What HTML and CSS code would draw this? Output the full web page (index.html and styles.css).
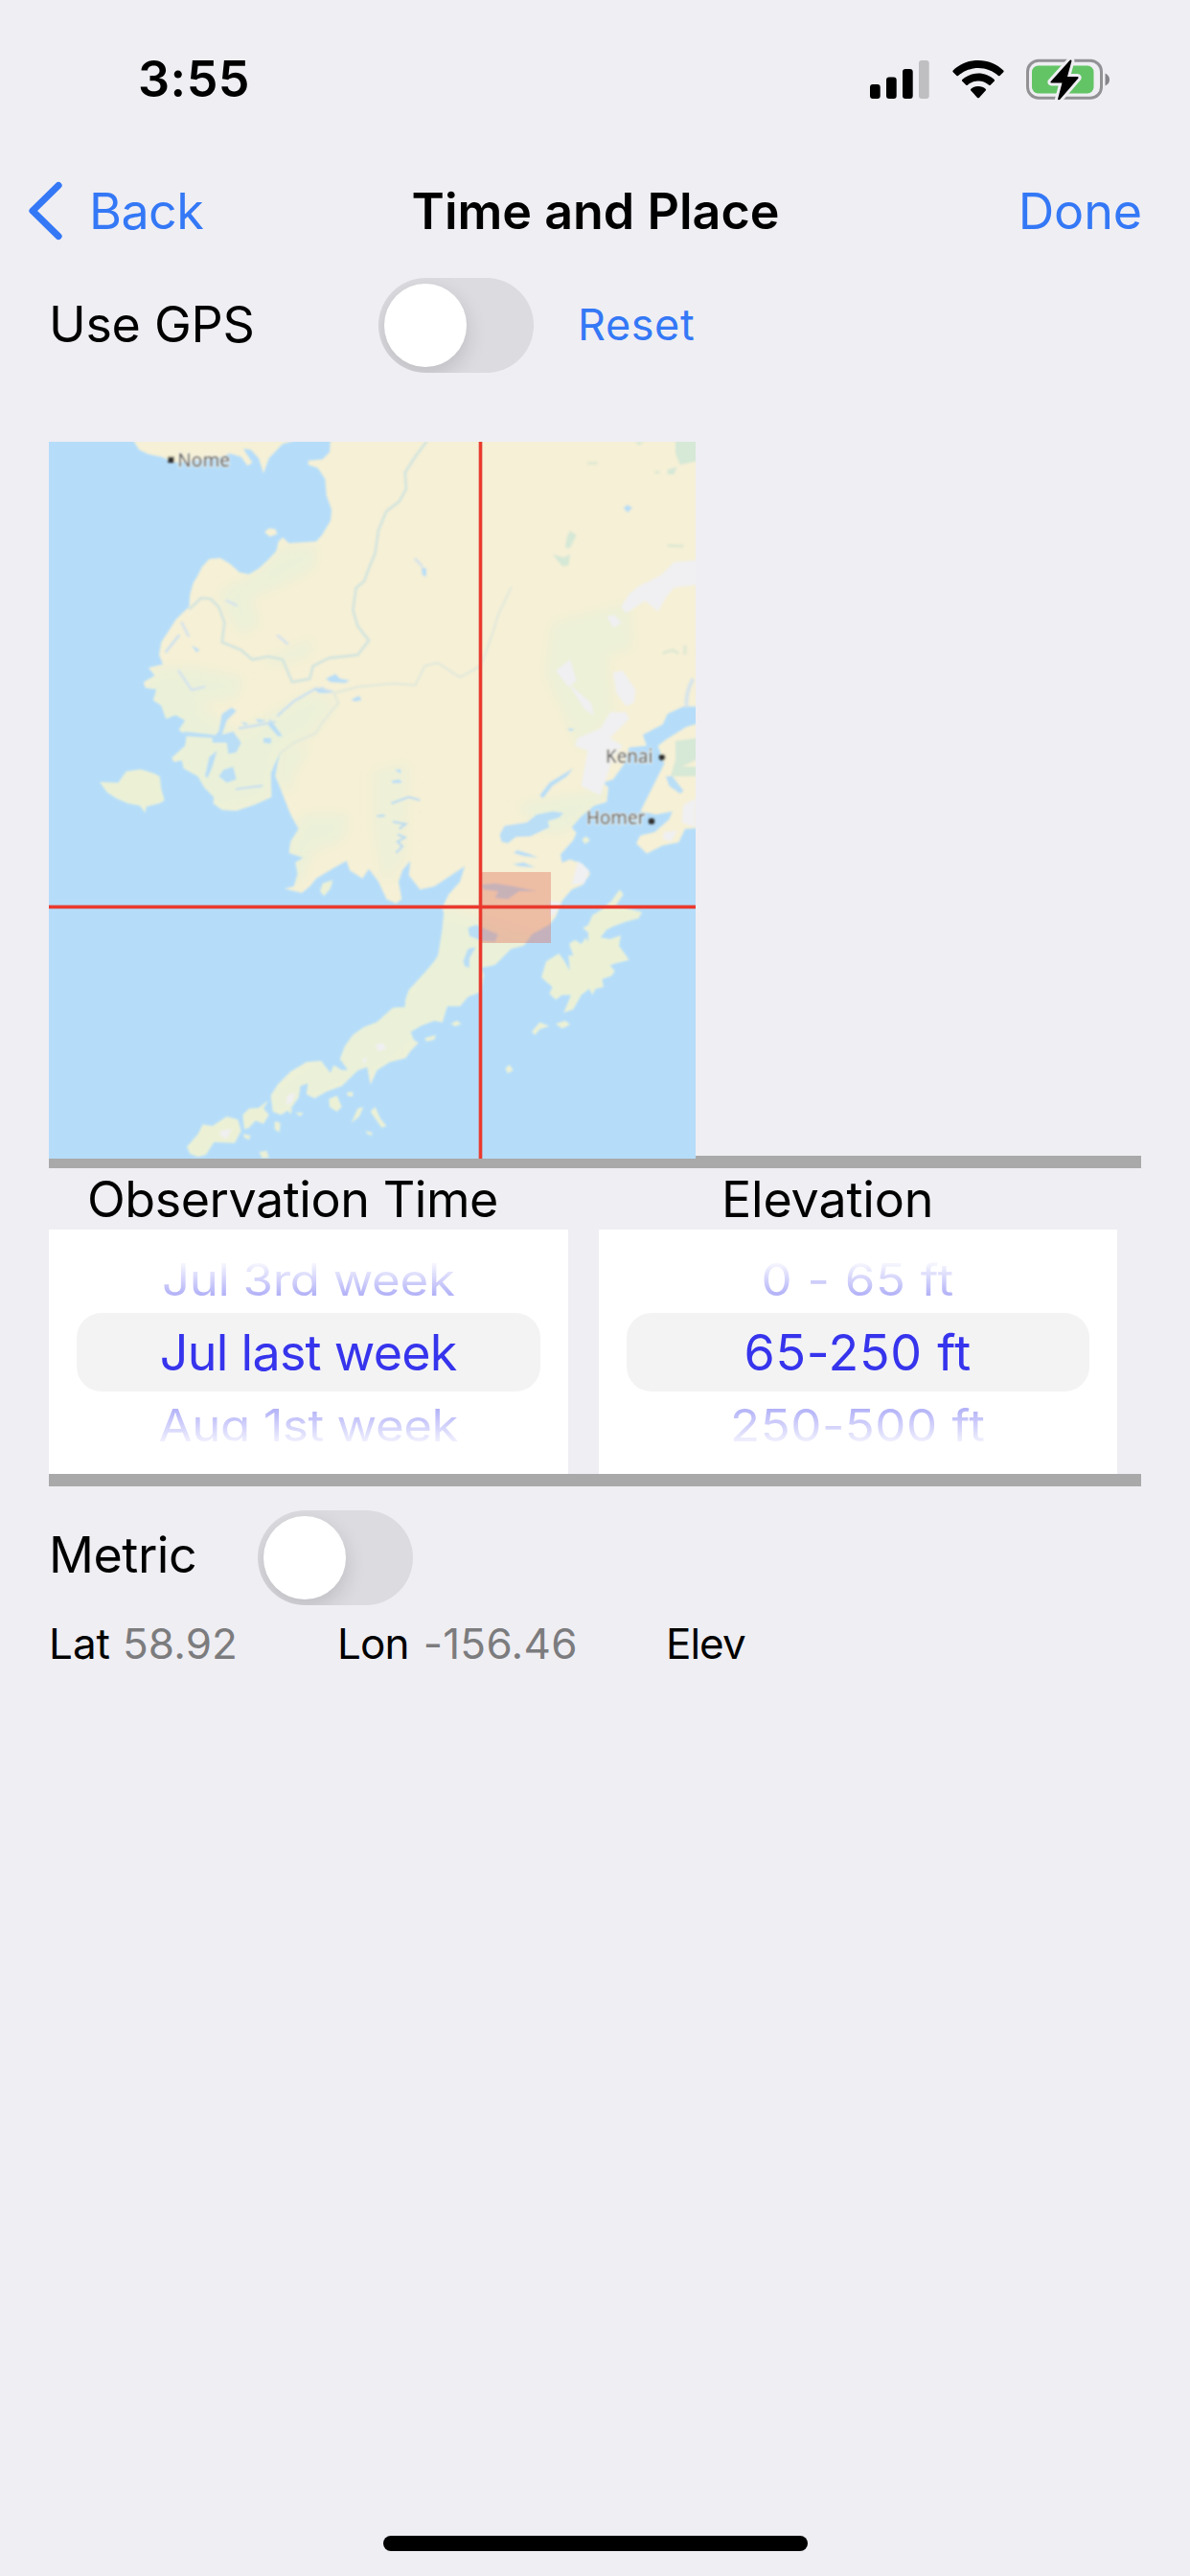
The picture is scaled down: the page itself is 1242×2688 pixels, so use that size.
FILE: index.html
```html
<!DOCTYPE html>
<html lang="en">
<head>
<meta charset="utf-8">
<title>Time and Place</title>
<link rel="stylesheet" href="styles.css">
</head>
<body>
<div class="screen">
  <header class="status">
    <span class="clock">3:55</span>
    <div class="status-icons">
      <svg class="signal" width="62" height="40" viewBox="0 0 62 40">
        <rect x="0" y="25" width="10.7" height="15" rx="3"/>
        <rect x="17" y="17.500" width="10.7" height="22.500" rx="3"/>
        <rect x="34" y="9" width="10.7" height="31" rx="3"/>
        <rect x="51" y="0" width="10.7" height="40" rx="3" fill="#bfbfc2"/>
      </svg>
      <svg class="wifi" width="54" height="40" viewBox="0 0 54 40">
        <path d="M27 0C37 0 46.500 4 53.300 10.500Q54 11.300 53.300 12.200L49.500 16Q48.700 16.600 48 16C42.500 11 35 8 27 8S11.500 11 6 16Q5.300 16.600 4.500 16L.7 12.200Q0 11.300 .7 10.500C7.500 4 17 0 27 0Z"/>
        <path d="M27 13.500C33.500 13.500 39.200 16 43.700 20Q44.500 20.900 43.700 21.700L39.700 25.700Q39 26.300 38.200 25.700C35 23 31.200 21.500 27 21.500S19 23 15.800 25.700Q15 26.300 14.300 25.700L10.300 21.700Q9.500 20.900 10.300 20C14.800 16 20.500 13.500 27 13.500Z"/>
        <path d="M27 27C30 27 32.600 28 34.600 29.700Q35.500 30.600 34.700 31.500L27.900 38.900Q27 39.800 26.100 38.900L19.300 31.500Q18.500 30.600 19.400 29.700C21.400 28 24 27 27 27Z"/>
      </svg>
      <svg class="battery" width="88" height="46" viewBox="0 0 88 46">
        <rect x="1.500" y="3.200" width="77" height="39" rx="11.500" fill="none" stroke="#929295" stroke-width="3"/>
        <path d="M82.500 16.500Q87 18.500 87 23T82.500 29.500Z" fill="#85858a"/>
        <rect x="6" y="8.500" width="64.500" height="29" rx="6.500" fill="#63c466"/>
        <path d="M46 2.500L25.500 25.200Q25 26.500 26.500 26.500H37.500L33 43.500Q34 45 35.500 43.500L54.500 21.500Q55 20 53.500 20H43L47.500 3.500Q47.200 2 46 2.500Z" stroke="#efeef3" stroke-width="6" stroke-linejoin="round"/>
        <path d="M46 2.500L25.500 25.200Q25 26.500 26.500 26.500H37.500L33 43.500Q34 45 35.500 43.500L54.500 21.500Q55 20 53.500 20H43L47.500 3.500Q47.200 2 46 2.500Z"/>
      </svg>
    </div>
  </header>

  <nav class="navbar">
    <a class="back">
      <svg width="38" height="64" viewBox="0 0 38 64"><path d="M32 5.500L5 32L32 58.500" fill="none" stroke="#3478f6" stroke-width="7.200" stroke-linecap="round" stroke-linejoin="round"/></svg>
      <span>Back</span>
    </a>
    <h1>Time and Place</h1>
    <a class="done">Done</a>
  </nav>

  <main>
    <section class="gps">
      <span class="label">Use GPS</span>
      <span class="toggle"><span class="knob"></span></span>
      <a class="reset">Reset</a>
    </section>

    <svg class="map" width="675" height="748" viewBox="33 33 2025 2244" preserveAspectRatio="none">
      <defs>
        <filter id="soft" x="-5%" y="-5%" width="110%" height="110%"><feGaussianBlur stdDeviation="3.500"/></filter>
        <filter id="haze" x="-20%" y="-20%" width="140%" height="140%"><feGaussianBlur stdDeviation="18"/></filter>
        <path id="mainland" d="M918 -20L912 65L890 88L845 92L845 105L875 115L898 150L902 200L918 245L915 280L888 325L870 345L785 350L765 332L752 345L745 375L720 402L690 430L660 448L630 442L600 415L570 397L535 400L512 425L500 450L485 475L475 510L472 550L450 570L430 590L405 630L385 660L378 700L390 730L345 740L365 765L330 785L335 803L370 808L360 842L385 858L400 900L430 888L460 905L440 935L465 950L460 985L418 1022L425 1035L450 1030L455 1055L500 1080L520 1115L550 1145L548 1165L575 1185L620 1188L680 1168L730 1145L728 1070L745 1030L760 1005L750 1035L742 1080L755 1110L770 1150L790 1200L815 1245L790 1285L785 1320L830 1335L805 1350L812 1385L800 1425L770 1432L825 1445L850 1425L870 1400L920 1370L965 1345L975 1375L1015 1400L1035 1370L1065 1410L1090 1465L1120 1478L1138 1465L1128 1410L1140 1375L1165 1345L1160 1390L1195 1435L1240 1425L1300 1385L1335 1362L1320 1410L1285 1450L1265 1490L1270 1510L1265 1560L1252 1640L1240 1660L1210 1695L1160 1750L1150 1780L1148 1803L1110 1805L1060 1850L1020 1865L985 1890L960 1925L945 1965L970 2000L950 2000L925 1985L915 2010L885 1972L840 1975L790 2005L750 2045L728 2080L735 2130L760 2140L790 2120L815 2085L820 2050L845 2040L840 2075L865 2088L900 2068L920 2060L950 2050L1000 2000L1030 1990L1040 2045L1060 2000L1100 1975L1150 1962L1165 1940L1190 1915L1175 1905L1165 1880L1200 1860L1240 1845L1265 1850L1280 1800L1320 1800L1345 1770L1385 1755L1395 1700L1385 1680L1430 1670L1480 1620L1520 1610L1545 1575L1600 1545L1620 1520L1640 1470L1670 1435L1705 1420L1728 1385L1705 1355L1665 1340L1640 1350L1635 1325L1675 1280L1685 1258L1670 1240L1700 1205L1740 1172L1780 1160L1785 1115L1770 1100L1800 1090L1835 1040L1850 990L1905 985L1893 950L1955 918L1970 885L2020 862L2100 862L2100 -20Z"/>
        <clipPath id="on-land"><use href="#mainland"/></clipPath>
      </defs>
      <rect x="33" y="33" width="2025" height="2244" fill="#b5ddfa"/>
      <g filter="url(#soft)">
        <g fill="#f5f0d6">
          <use href="#mainland"/>
          <path d="M300 -20L300 33L315 58L345 72L385 80L430 98L560 85L600 70L635 80L655 108L670 98L642 55L665 58L690 85L705 132L722 85L765 40L800 30L800 -20Z"/>
          <path d="M708 316L722 304L742 306L748 322L725 330Z"/>
          <path d="M2100 905L2030 925L1965 965L1940 985L1960 1040L1930 1100L1905 1150L1885 1190L1935 1200L1985 1190L1975 1215L1930 1255L1885 1265L1872 1290L1905 1322L1955 1297L2005 1287L2025 1245L2100 1240Z"/>
        </g>
        <g clip-path="url(#on-land)">
          <g filter="url(#haze)" fill="#ebf1d8">
            <path d="M760 370L870 360L860 430L740 490L660 520L690 600L640 640L590 560L570 500L680 450Z"/>
            <path d="M370 740L480 740L640 770L620 830L500 850L620 950L700 900L850 820L930 850L850 950L760 1000L720 1160L560 1200L420 1040L330 800Z"/>
            <path d="M1610 600L1850 540L1860 680L1780 700L1800 880L1700 1000L1640 870L1590 760Z" fill-opacity=".8"/>
            <path d="M770 1000L850 990L800 1060L790 1130L750 1100Z"/>
            <path d="M830 1200L970 1200L950 1280L860 1310L820 1410L790 1430L780 1290Z"/>
            <path d="M1050 1060L1160 1040L1150 1340L1080 1420L1050 1250Z" fill-opacity=".7"/>
            <path d="M1260 1490L1640 1600L1380 1780L1100 2000L700 2180L700 2060L930 1900L1150 1740Z"/>
            <path d="M1500 1170L1800 1120L1680 1240L1600 1260Z"/>
            <path d="M700 720L860 650L850 700L740 730Z"/>
          </g>
        </g>
        <g fill="#ecf1d6">
          <path d="M192 1098L250 1100L275 1065L320 1058L360 1070L380 1080L385 1120L395 1155L380 1165L338 1175L335 1195L318 1172L280 1165L245 1150L215 1130Z"/>
          <path d="M465 2240L500 2200L515 2170L545 2175L590 2145L625 2155L635 2190L615 2228L550 2225L525 2265L500 2272L475 2262Z"/>
          <path d="M1820 1435L1832 1450L1808 1485L1890 1505L1880 1525L1840 1535L1800 1550L1780 1560L1760 1585L1790 1590L1824 1578L1818 1610L1850 1655L1810 1665L1790 1672L1805 1690L1795 1705L1765 1715L1770 1740L1745 1745L1735 1765L1725 1745L1700 1765L1675 1810L1645 1820L1668 1765L1640 1765L1620 1780L1600 1760L1610 1740L1575 1710L1590 1660L1630 1635L1648 1660L1664 1690L1660 1640L1675 1642L1662 1605L1680 1592L1700 1605L1715 1585L1722 1600L1722 1570L1705 1555L1722 1545L1735 1515L1760 1500L1795 1470Z"/>
          <path d="M1545 1880L1570 1850L1600 1862L1570 1872L1555 1890ZM1620 1855L1650 1845L1665 1858L1640 1870ZM1462 1995L1475 1983L1487 2000L1470 2010ZM1292 1855L1310 1845L1325 1855L1305 1863ZM882 1440L890 1415L922 1405L915 1430L895 1455ZM1702 1278L1715 1268L1728 1280L1712 1292Z"/>
          <path d="M640 2140L660 2120L690 2118L720 2095L705 2120L722 2140L705 2168L680 2158L660 2180L645 2185ZM740 2160L758 2165L755 2195L740 2185ZM910 2090L935 2080L950 2115L935 2130L912 2115ZM980 2165L1000 2120L1018 2115L1005 2145ZM642 2200L665 2205L660 2218L645 2212ZM692 2256L715 2252L722 2275L700 2275ZM1210 1900L1245 1890L1240 1905L1215 1910ZM1040 2130L1055 2115L1070 2150L1090 2175L1075 2180ZM965 2070L985 2068L985 2082L970 2082ZM780 2125L795 2120L790 2138ZM805 2133L830 2133L820 2145ZM1025 2190L1045 2195L1045 2205L1030 2200Z"/>
        </g>
        <g fill="#b9def6">
          <path d="M1445 1262L1460 1235L1530 1225L1560 1200L1610 1190L1645 1195L1630 1210L1595 1220L1600 1240L1540 1268L1495 1270L1470 1290L1450 1285Z"/>
          <path d="M1488 1320L1500 1312L1535 1322L1565 1335L1520 1330ZM1485 1355L1520 1350L1555 1365L1510 1362Z"/>
          <path d="M1385 1420L1430 1415L1490 1425L1560 1440L1505 1440L1470 1465L1430 1460L1440 1440L1395 1435Z"/>
          <path d="M1345 1555L1370 1545L1440 1575L1430 1598L1390 1595L1350 1580ZM1330 1660L1345 1620L1370 1615L1350 1650L1350 1680L1335 1675Z"/>
          <path d="M545 960L565 940L575 885L605 865L620 875L590 905L575 950L610 940L635 975L620 1005L595 1010L590 975L545 975Z"/>
          <path d="M580 1060L610 1050L620 1090L590 1100L565 1080ZM522 1080L535 1020L560 1000L545 1050L530 1085ZM455 940L550 950L550 960L460 955Z"/>
          <path d="M705 960L730 960L728 978L705 975ZM725 900L765 955L750 955L720 920ZM680 900L715 905L690 912ZM635 910L660 915L645 920Z"/>
          <path d="M900 775L930 760L945 775L975 780L960 788L915 785ZM865 810L890 800L915 820L880 820ZM980 840L1005 828L1012 842L990 846Z"/>
          <path d="M1832 240L1845 230L1860 240L1845 254ZM1570 1140L1600 1100L1675 1055L1655 1080L1610 1110L1580 1150ZM1655 930L1680 932L1668 940ZM1965 1080L1985 1080L2020 1125L2010 1135L1975 1110Z"/>
          <path d="M1105 1095L1130 1090L1140 1100L1110 1102ZM1115 1060L1135 1058L1135 1072ZM1200 425L1215 430L1215 455L1202 450ZM480 670L505 685L495 692Z"/>
        </g>
        <path d="M1105 1165L1160 1145L1195 1155M1110 1222L1150 1230L1130 1245M1125 1262L1148 1272L1125 1285L1140 1300L1120 1320M1060 1205L1085 1203" fill="none" stroke="#bcdcf0" stroke-width="7"/>
        <g fill="none" stroke="#d3e4de" stroke-width="8" stroke-linecap="round" stroke-linejoin="round">
          <path d="M1215 33L1180 80L1148 130L1152 180L1130 220L1090 250L1065 310L1055 380L1035 430L1020 470L995 490L985 560L1000 610L1035 655L1000 700L910 710L860 735L850 775L795 785L765 715L720 705L670 715L635 685L575 660L583 600L565 550L540 525L510 522L475 555"/>
          <path d="M755 1010L800 975L870 945L890 910L940 850L925 820L1000 800L1110 790L1180 795L1210 735L1250 725L1320 770L1385 735L1420 640L1440 575L1480 490" stroke="#e0e8dc" stroke-width="6"/>
          <path d="M750 890L800 845L870 805L920 815M400 690L440 640M620 1120L700 1110M630 930L740 910" stroke="#c8dff0" stroke-width="7"/>
          <path d="M440 750L480 810L520 800M450 600L470 640M590 530L620 545M750 640L780 665M1180 400L1200 420" stroke="#d5e2ec" stroke-width="8"/>
        </g>
        <g fill="#f0f0f2">
          <path d="M2100 400L1990 410L1950 450L1880 485L1850 510L1825 550L1840 570L1900 530L1940 565L1965 520L1990 490L2100 475Z"/>
          <path d="M1800 755L1830 750L1870 810L1865 850L1840 860L1810 820ZM1780 580L1805 575L1825 600L1800 615ZM1620 750L1665 715L1685 780L1660 800ZM1690 960L1760 930L1790 880L1840 880L1850 900L1790 960L1830 985L1800 1020L1780 1080L1760 1140L1700 1110L1720 1000L1680 985ZM1660 790L1730 850L1740 890L1710 870Z"/>
          <path d="M1690 1345L1725 1375L1710 1415L1670 1420ZM1600 1470L1635 1475L1620 1510L1600 1520ZM1055 1920L1078 1915L1090 1932L1065 1942ZM1015 1965L1030 1960L1020 1985ZM570 2190L605 2185L590 2215L570 2205ZM780 2080L805 2070L795 2100L775 2110ZM2020 1170L2058 1150V1240L2015 1225ZM1960 1255L2000 1250L1980 1285L1955 1275Z"/>
        </g>
        <g fill="#d6e8d6">
          <path d="M1995 -20H2100V85L2010 105L1995 70ZM1970 120L2000 112L1990 135L1970 135ZM1655 330L1665 312L1685 325L1665 365L1650 365ZM1610 385L1645 395L1665 385L1660 420L1640 422ZM1870 33H1895L1880 45ZM1995 970L2100 955V1010L2015 1050L2100 1050V1080H1980L1995 1030Z"/>
          <path d="M1955 695L1985 685L2005 695M2025 670V700M1970 358L2020 360M1720 100H1750M1930 128H1945" fill="none" stroke="#dfe8d2" stroke-width="9"/>
        </g>
        <path d="M2050 775Q2025 820 2030 865" fill="none" stroke="#d6e4ea" stroke-width="12"/>
        <g class="places">
          <rect x="406" y="80" width="19" height="19"/>
          <text x="436" y="110" textLength="164" lengthAdjust="spacingAndGlyphs">Nome</text>
          <text x="1776" y="1038" textLength="148" lengthAdjust="spacingAndGlyphs">Kenai</text>
          <circle cx="1953" cy="1021" r="10"/>
          <text x="1716" y="1231" textLength="184" lengthAdjust="spacingAndGlyphs">Homer</text>
          <circle cx="1920" cy="1221" r="10"/>
        </g>
      </g>
      <rect x="1384" y="1380" width="221" height="222" fill="#e0634c" fill-opacity=".36"/>
      <path d="M1384.500 33V2277M33 1489H2058" stroke="#e2453c" stroke-width="11" fill="none"/>
      <path d="M1384.500 33V2277M33 1489H2058" stroke="#ee3527" stroke-width="5" fill="none"/>
    </svg>

    <hr class="rule upper">

    <section class="headings">
      <h2 class="time-title">Observation Time</h2>
      <h2 class="elev-title">Elevation</h2>
    </section>

    <section class="pickers">
      <div class="picker">
        <div class="row above"><span class="t1">Jul 3rd week</span></div>
        <div class="row chosen"><span class="t2">Jul last week</span></div>
        <div class="row below"><span class="t3">Aug 1st week</span></div>
      </div>
      <div class="picker">
        <div class="row above"><span class="e1">0 - 65 ft</span></div>
        <div class="row chosen"><span class="e2">65-250 ft</span></div>
        <div class="row below"><span class="e3">250-500 ft</span></div>
      </div>
    </section>

    <hr class="rule">

    <section class="metric">
      <span class="label">Metric</span>
      <span class="toggle"><span class="knob"></span></span>
    </section>

    <section class="coords">
      <div class="lat"><span class="name">Lat</span><span class="value">58.92</span></div>
      <div class="lon"><span class="name">Lon</span><span class="value">-156.46</span></div>
      <div class="elev"><span class="name">Elev</span></div>
    </section>
  </main>

  <div class="home"></div>
</div>
</body>
</html>
```
FILE: styles.css
```css
* { box-sizing: border-box; }

body {
  margin: 0;
  background: #efeef3;
  color: #000;
  font-family: Inter, "Liberation Sans", sans-serif;
  font-size: 52px;
}

h1, h2 { margin: 0; font-size: 52px; }

.screen {
  display: flex;
  flex-direction: column;
  width: 1242px;
  height: 2688px;
}

/* Status bar */
.status {
  display: flex;
  justify-content: space-between;
  align-items: center;
  height: 165px;
  padding: 0 83px 0 144px;
}
.clock { font-weight: 600; letter-spacing: .5px; }
.status-icons { display: flex; align-items: center; }
.signal { margin-right: 24px; }
.wifi { margin-right: 23px; }
.signal, .wifi, .battery { display: block; }

/* Navigation bar */
.navbar {
  display: grid;
  grid-template-columns: 1fr auto 1fr;
  align-items: center;
  height: 110px;
  padding: 0 50px 0 29px;
}
.back, .done, .reset { color: #3478f6; }
.back { display: flex; align-items: center; gap: 26px; letter-spacing: -.6px; }
.back svg { display: block; }
.navbar h1 { font-weight: 600; transform: translateX(11px); }
.done { justify-self: end; letter-spacing: -.1px; }

/* Content */
main { display: flex; flex-direction: column; width: 1191px; padding-left: 51px; }

.toggle {
  flex: none;
  width: 162px;
  height: 99px;
  padding: 6px;
  border-radius: 50px;
  background: #dcdbe0;
  overflow: hidden;
}
.knob {
  display: block;
  width: 86px;
  height: 87px;
  border-radius: 50%;
  background: #fff;
  box-shadow: 0 8px 22px rgba(0, 0, 0, .14);
}

.gps { display: flex; align-items: center; height: 129px; }
.gps .label { width: 344px; padding-bottom: 2px; letter-spacing: -.27px; }
.reset { margin-left: 46px; padding-bottom: 3px; font-size: 45px; letter-spacing: .6px; }

.map { display: block; position: relative; z-index: 1; margin-top: 57px; }
.places text {
  font-family: "Noto Sans", sans-serif;
  font-size: 57px;
  fill: #4a4a50;
  stroke: #f7f5ea;
  stroke-width: 5px;
  paint-order: stroke;
}
.places { fill: #303030; }

.rule { width: 100%; height: 13px; margin: 0; border: 0; background: #a9a9a9; }
.upper { margin-top: -3px; }

.headings { display: flex; height: 64px; line-height: 66px; }
.headings h2 { font-weight: 400; }
.time-title { width: 662px; padding-left: 40px; letter-spacing: -.45px; }
.elev-title { padding-left: 40px; letter-spacing: -.18px; }

/* Wheels */
.pickers { display: flex; gap: 32px; height: 255px; }
.picker { width: 541.500px; padding: 0 29px; background: #fff; color: #3634ec; }
.row { text-align: center; }
.row span { display: inline-block; }
.above {
  height: 87px;
  padding-top: 19px;
  line-height: 68px;
  -webkit-mask-image: linear-gradient(rgba(0,0,0,.02) 33px, rgba(0,0,0,.4) 70px);
  mask-image: linear-gradient(rgba(0,0,0,.02) 33px, rgba(0,0,0,.4) 70px);
}
.chosen { height: 82px; line-height: 84px; border-radius: 26px; background: #f3f3f4; }
.below {
  height: 86px;
  line-height: 71px;
  -webkit-mask-image: linear-gradient(rgba(0,0,0,.38) 18px, rgba(0,0,0,.08) 52px, transparent 52px);
  mask-image: linear-gradient(rgba(0,0,0,.38) 18px, rgba(0,0,0,.08) 52px, transparent 52px);
}
.above span, .below span { font-size: 51px; transform: scaleY(.9); }
.t1 { letter-spacing: -.33px; }
.t2 { letter-spacing: -.73px; }
.t3 { letter-spacing: -.45px; }
.e1, .e2 { letter-spacing: .7px; }
.e3 { letter-spacing: .5px; }

/* Units and coordinates */
.metric { display: flex; align-items: center; padding-top: 25px; }
.metric .label { width: 218px; padding-bottom: 6px; letter-spacing: -.46px; }

.coords { display: flex; height: 80px; line-height: 80px; font-size: 44px; }
.coords div { display: flex; }
.value { color: #7c7c7e; }
.lat { width: 301px; gap: 13px; }
.lat .value { letter-spacing: .1px; }
.lon { width: 343px; gap: 15px; }
.lon .name { letter-spacing: -.88px; }
.lon .value { letter-spacing: .3px; }
.elev { letter-spacing: -1px; }

.home {
  width: 443px;
  height: 16px;
  margin: auto auto 26px;
  border-radius: 8px;
  background: #000;
}
```
